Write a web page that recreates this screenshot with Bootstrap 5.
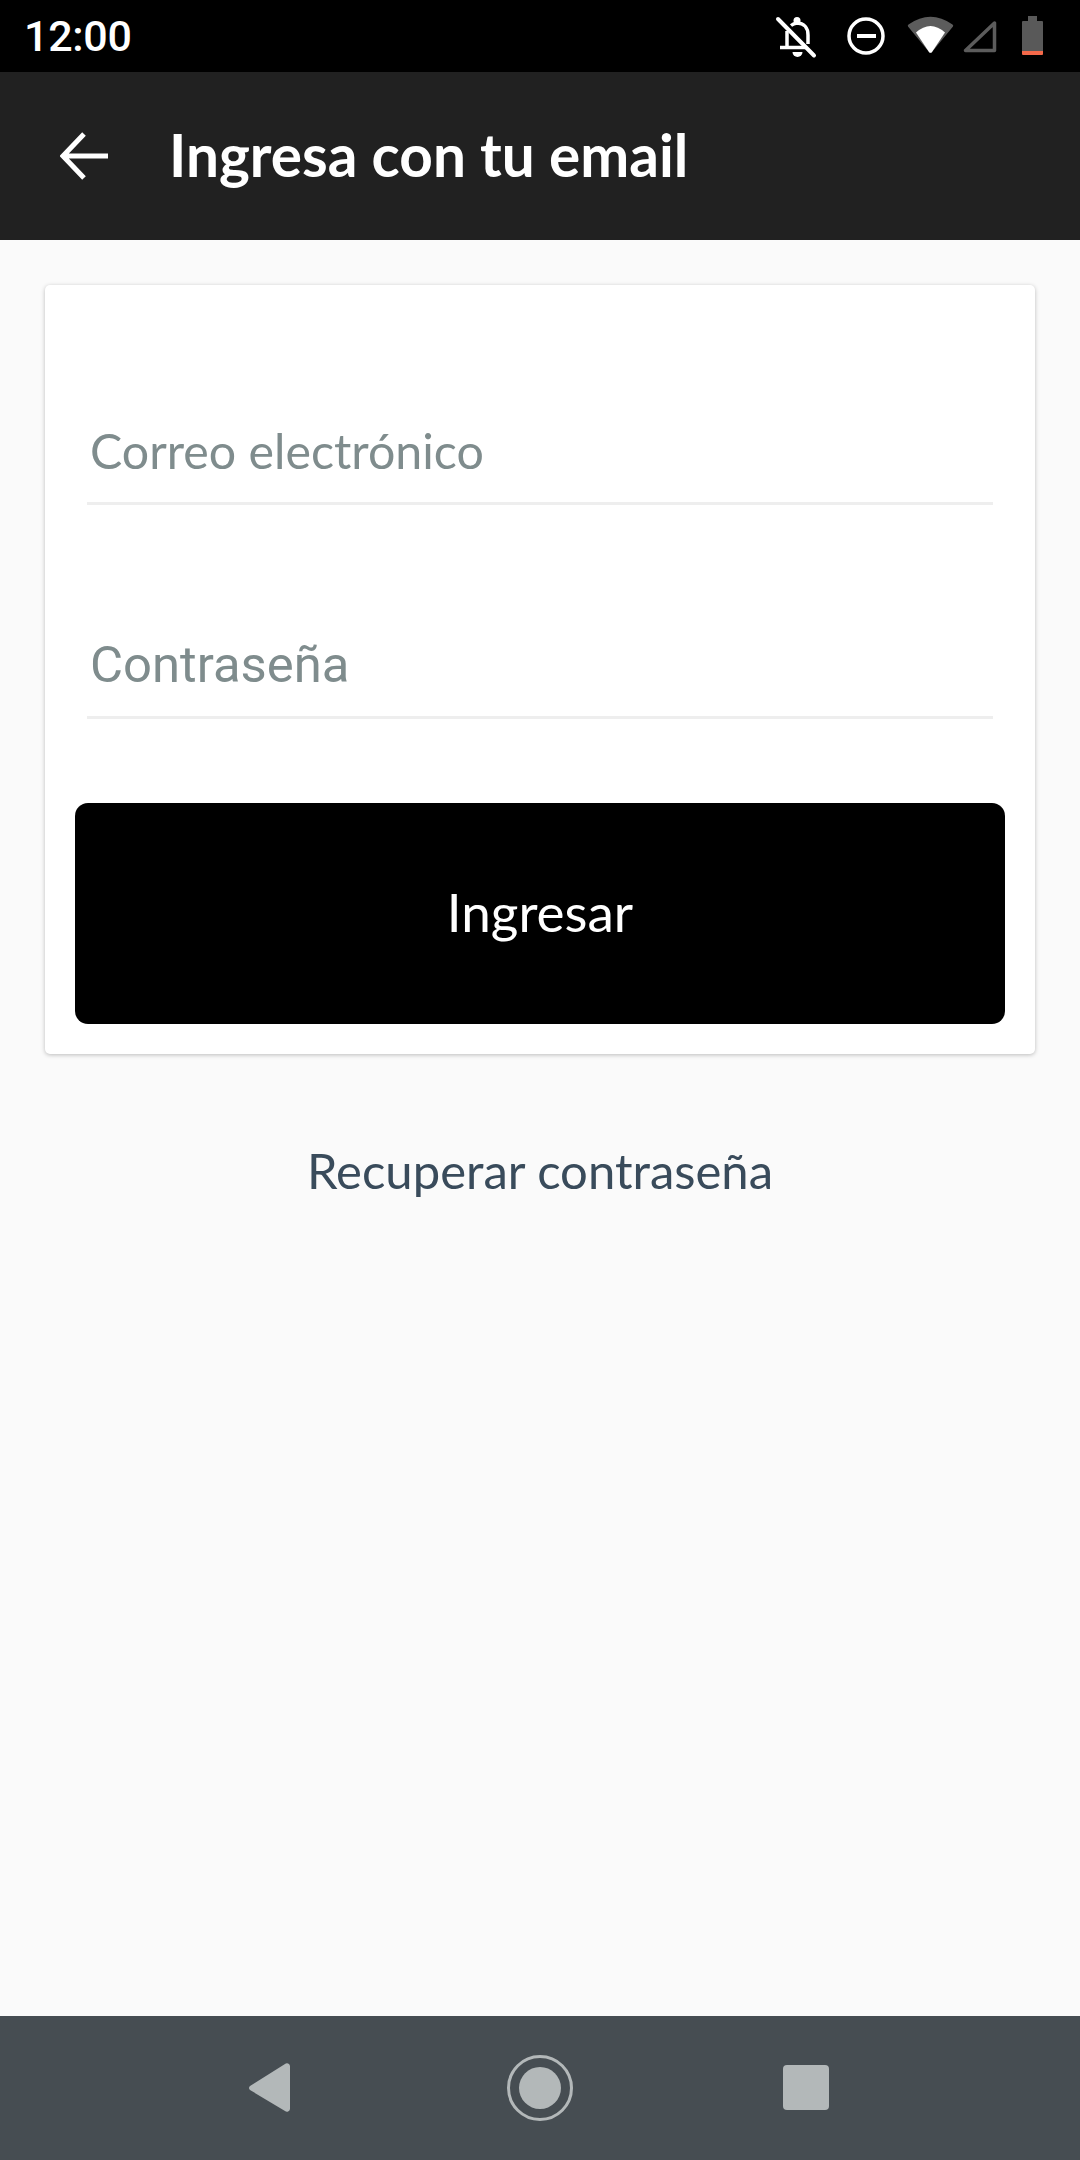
<!DOCTYPE html>
<html lang="es">
<head>
<meta charset="utf-8">
<title>Ingresa con tu email</title>
<link href="https://cdn.jsdelivr.net/npm/bootstrap@5.3.0/dist/css/bootstrap.min.css" rel="stylesheet">
<style>
html,body{height:2160px;margin:0;overflow:hidden}
body{background:#fafafa;font-family:"Lato","Noto Sans",sans-serif}
.page-shell{height:2160px}
.status-strip{height:72px;background:#000;color:#fff;padding:0 24px 0 24px}
.status-time{font:500 43px/72px Roboto,sans-serif;letter-spacing:-.3px}
.app-strip{height:168px;background:#212121;color:#fff;padding-left:60px}
.back-arrow{width:48px;height:48px;margin-right:61px}
.app-title{font-size:58.500px;font-weight:700;line-height:1;margin:0;white-space:nowrap;position:relative;top:-2px}
.login-card{margin:45px 45px 0;height:769px;border:0;border-radius:5px;background:#fff;box-shadow:0 1px 4px rgba(0,0,0,.25);padding:0 30px}
.login-field{margin:-4px 12px 0;border-bottom:3px solid #eee;padding:0 0 22px 3px;height:218px;display:flex;align-items:flex-end;color:#7f8c8d;font-size:48.300px;line-height:60px}
.login-field.first{height:220px;margin-top:0}
.login-field .form-label{margin:0}
.field-roboto{font-family:Roboto,sans-serif;font-size:50.800px;padding-bottom:21px}
.login-btn{display:block;width:100%;height:221px;margin-top:84px;padding-bottom:9px;background:#000;color:#fff;border:0;border-radius:13px;font-size:53px}
.login-btn:hover{background:#000;color:#fff}
.recover-link{display:block;margin-top:86px;color:#394b5b;font-size:49px;line-height:60px;text-align:center;text-decoration:none}
.nav-strip{height:144px;background:#464d52}
</style>
</head>
<body>
<div class="page-shell d-flex flex-column">
  <div class="status-strip d-flex justify-content-between align-items-center flex-shrink-0">
    <span class="status-time">12:00</span>
    <svg width="300" height="72" viewBox="756 0 300 72">
      <g fill="none" stroke="#fff" stroke-width="3.500">
        <path d="M787 31v17M780 47.500h25"/>
        <path d="M791 25.500a12 12 0 0 1 6-2.500c7 0 11 5 11 12v9"/>
        <path d="M778 19l36 36.500" stroke-width="4" stroke-linecap="round"/>
        <circle cx="866" cy="36" r="17"/>
      </g>
      <circle cx="797" cy="20.500" r="3.500" fill="#fff"/>
      <path d="M792.500 52h10a5 5 0 0 1-10 0z" fill="#fff"/>
      <rect x="857" y="34" width="19" height="4" fill="#fff"/>
      <path d="M908.500 24.500Q930.500 9 952.500 24.500a1.500 1.500 0 0 1 .5 2L932 52a2 2 0 0 1-3 0L908 26.500a1.500 1.500 0 0 1 .5-2z" fill="#5c5c5c"/>
      <path d="M916 32.500Q930.500 19.500 945 32.500L932 52a2 2 0 0 1-3 0z" fill="#fff"/>
      <path d="M965.500 50.500L994.500 23v27.500z" fill="none" stroke="#5c5c5c" stroke-width="3.500" stroke-linejoin="round"/>
      <path d="M1028 16h9v5h5a1 1 0 0 1 1 1v29h-21V22a1 1 0 0 1 1-1h5z" fill="#595959"/>
      <path d="M1022 51h21v3a1 1 0 0 1-1 1h-19a1 1 0 0 1-1-1z" fill="#f4694a"/>
    </svg>
  </div>
  <div class="app-strip d-flex align-items-center flex-shrink-0">
    <svg class="back-arrow" viewBox="0 0 48 48" fill="none" stroke="#fff" stroke-width="5"><path d="M48 24H3M24 2L3 24l21 22"/></svg>
    <h1 class="app-title">Ingresa con tu email</h1>
  </div>
  <main class="flex-grow-1">
    <div class="card login-card">
      <div class="login-field first"><label class="form-label">Correo electrónico</label></div>
      <div class="login-field field-roboto"><label class="form-label">Contraseña</label></div>
      <button type="button" class="btn login-btn">Ingresar</button>
    </div>
    <a href="#" class="recover-link">Recuperar contraseña</a>
  </main>
  <div class="nav-strip d-flex align-items-center justify-content-center flex-shrink-0">
    <svg width="1080" height="144" viewBox="0 2016 1080 144">
      <path d="M290 2066v43a3 3 0 0 1-5 2l-35-21a2.500 2.500 0 0 1 0-4l35-22a3 3 0 0 1 5 2z" fill="#b3b8b9"/>
      <circle cx="540" cy="2088" r="31.500" fill="none" stroke="#b3b8b9" stroke-width="3"/>
      <circle cx="540" cy="2088" r="21" fill="#b3b8b9"/>
      <rect x="783" y="2065" width="46" height="45" rx="4" fill="#b3b8b9"/>
    </svg>
  </div>
</div>
<script src="https://cdn.jsdelivr.net/npm/bootstrap@5.3.0/dist/js/bootstrap.bundle.min.js"></script>
</body>
</html>
